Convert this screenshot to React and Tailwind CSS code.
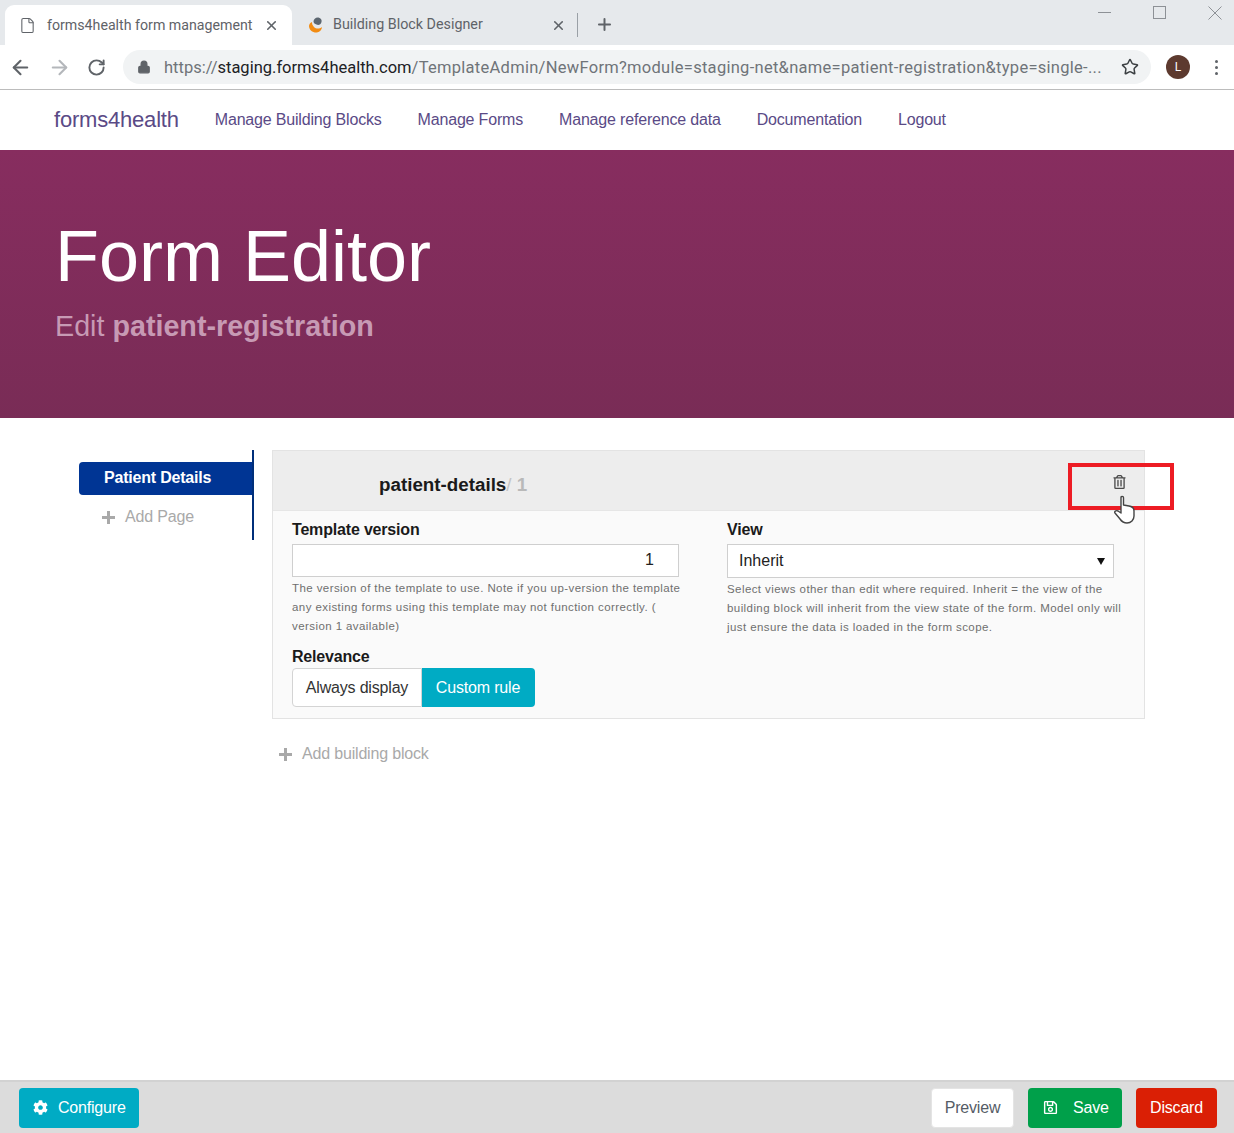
import { ArrowLeft, ArrowRight, RotateCw, Lock, Star, Plus, X, File } from "lucide-react";
import { FaCog, FaRegSave, FaRegTrashAlt } from "react-icons/fa";

const NAV = ["Manage Building Blocks", "Manage Forms", "Manage reference data", "Documentation", "Logout"];

function PlusGlyph() {
  return (
    <svg viewBox="0 0 13 13" className="h-[13px] w-[13px] flex-none" fill="#a9a9a9">
      <path d="M5 0h3v5h5v3H8v5H5V8H0V5h5z" />
    </svg>
  );
}

function BrowserChrome() {
  return (
    <div className="font-['Roboto',sans-serif]">
      {/* Tab strip */}
      <div className="relative flex h-[45px] items-end bg-[#e6e9ec] pl-[5px]">
        <div className="flex h-[40px] w-[287px] items-center rounded-t-[9px] bg-white pl-[14px] pr-[13px]">
          <File className="h-[17px] w-[17px] text-[#5f6368]" strokeWidth={1.5} />
          <span className="ml-[11px] flex-1 whitespace-nowrap pt-[2px] text-[14.2px] text-[#5f6368]">forms4health form management</span>
          <X className="h-[15px] w-[15px] text-[#5f6368]" strokeWidth={2.5} />
        </div>
        <div className="flex h-[40px] w-[280px] items-center pl-[15px] pr-[6px]">
          <svg viewBox="0 0 18 18" className="h-[18px] w-[18px]">
            <path d="M2 10 C2 14 6 17 10 16.5 C13 16 15 13.5 15 11 C12.5 13 9 13 7 11 C5.5 9.5 5 8 5 6 C3 7 2 8.5 2 10Z" fill="#f28c13" />
            <path d="M6.5 5.5 C6.5 3 9 1 11.5 1.5 C14 2 15 4 14.5 6 C14 8.5 11.5 9.5 9.5 8.5 C8 8 6.5 7 6.5 5.5Z" fill="#5c6670" />
          </svg>
          <span className="ml-[8px] flex-1 whitespace-nowrap text-[14.3px] text-[#5f6368]">Building Block Designer</span>
          <X className="h-[15px] w-[15px] text-[#5f6368]" strokeWidth={2.5} />
        </div>
        <div className="mb-[8px] ml-[5px] h-[24px] w-px bg-[#9aa0a6]" />
        <Plus className="mb-[11px] ml-[17px] h-[19px] w-[19px] text-[#5f6368]" strokeWidth={2.5} />
        {/* Window controls */}
        <div className="absolute left-[1098px] top-[6px] flex items-start gap-[42px]">
          <span className="mt-[6px] h-px w-[13px] bg-[#8d9196]" />
          <span className="h-[13px] w-[13px] border border-[#8d9196]" />
          <svg viewBox="0 0 14 14" className="h-[14px] w-[14px]" stroke="#8d9196" strokeWidth="1">
            <path d="M0.5 0.5 L13.5 13.5 M13.5 0.5 L0.5 13.5" />
          </svg>
        </div>
      </div>
      {/* Toolbar */}
      <div className="flex h-[45px] items-center border-b border-[#bcbcbc] bg-white pl-[9px] pr-[9px]">
        <ArrowLeft className="h-[23px] w-[23px] text-[#5f6368]" strokeWidth={2.2} />
        <ArrowRight className="ml-[16px] h-[23px] w-[23px] text-[#b4b7bb]" strokeWidth={2.2} />
        <RotateCw className="ml-[16px] h-[19px] w-[19px] text-[#5f6368]" strokeWidth={2.4} />
        <div className="ml-[17px] flex h-[34px] w-[1028px] items-center rounded-full bg-[#f1f3f4] pl-[14px] pr-[12px]">
          <Lock className="h-[14px] w-[14px] fill-[#5f6368] text-[#5f6368]" strokeWidth={2} />
          <span className="ml-[13px] flex-1 whitespace-nowrap pt-[2px] text-[16.5px] text-[#6f7479]">
            https://<span className="text-[#202124]">staging.forms4health.com</span>
            <span className="tracking-[0.28px]">/TemplateAdmin/NewForm?module=staging-net&amp;name=patient-registration&amp;type=single-...</span>
          </span>
          <Star className="h-[18px] w-[18px] text-[#3c4043]" strokeWidth={2} />
        </div>
        <div className="ml-[15px] flex h-[24px] w-[24px] items-center justify-center rounded-full bg-[#5d3a2f] text-[12px] text-white">L</div>
        <div className="ml-[25px] flex flex-col gap-[3px]">
          <span className="h-[3px] w-[3px] rounded-full bg-[#5f6368]" />
          <span className="h-[3px] w-[3px] rounded-full bg-[#5f6368]" />
          <span className="h-[3px] w-[3px] rounded-full bg-[#5f6368]" />
        </div>
      </div>
    </div>
  );
}

function TopNav() {
  return (
    <nav className="flex h-[60px] items-center bg-white pl-[54px] text-[#5a4a86]">
      <span className="mb-[2px] mr-[36px] text-[22px] tracking-[-0.2px]">forms4health</span>
      <div className="flex gap-[36px] text-[16px] tracking-[-0.18px]">
        {NAV.map((item) => (
          <span key={item} className="whitespace-nowrap">{item}</span>
        ))}
      </div>
    </nav>
  );
}

function Hero() {
  return (
    <header className="h-[268px] bg-linear-to-b from-[#872d5f] to-[#792c56] pl-[55px] pt-[62px]">
      <h1 className="text-[72px] leading-[88px] text-white">Form Editor</h1>
      <p className="mt-[8px] text-[28.7px] leading-[36px] text-[#c79ab4]">
        Edit <span className="font-bold">patient-registration</span>
      </p>
    </header>
  );
}

function Sidebar() {
  return (
    <aside className="h-[90px] w-[175px] border-r-2 border-[#002f7a] pt-[12px]">
      <div className="flex h-[33px] items-center rounded-l-[4px] bg-[#003594] pb-[2px] pl-[25px] text-[16px] font-bold tracking-[-0.2px] text-white">
        Patient Details
      </div>
      <div className="mt-[10px] flex items-center pl-[23px] text-[16px] tracking-[-0.15px] text-[#a9a9a9]">
        <PlusGlyph />
        <span className="ml-[10px]">Add Page</span>
      </div>
    </aside>
  );
}

function BlockPanel() {
  return (
    <div className="flex-none">
      <section className="h-[269px] w-[873px] border border-[#e3e3e3] bg-[#fafafa]">
        <div className="flex h-[60px] items-center border-b border-[#e6e6e6] bg-[#ededed] pl-[106px] pr-[18px]">
          <span className="flex-1 pt-[10px] text-[18.8px] font-bold text-[#1a1a1a]">
            patient-details<span className="font-normal text-[#c4c4c4]">/</span>
            <span className="text-[#b9b9b9]"> 1</span>
          </span>
          <FaRegTrashAlt className="mt-[2px] h-[14px] w-[13px] text-[#4a4a4a]" />
        </div>
        <div className="grid grid-cols-[435px_1fr] pl-[19px] pt-[9px]">
          <div>
            <label className="block text-[16px] font-bold leading-[19px] tracking-[-0.18px] text-[#1a1a1a]">Template version</label>
            <div className="mt-[5px] flex h-[33px] w-[387px] items-center justify-end border border-[#cfcfcf] bg-white pb-[2px] pr-[24px] text-[16px] text-[#222]">1</div>
            <p className="mt-[2px] w-[395px] text-[11.5px] leading-[19px] tracking-[0.42px] text-[#6f6f6f]">
              The version of the template to use. Note if you up-version the template any existing forms using this template may not function correctly. ( version 1 available)
            </p>
            <label className="mt-[11px] block text-[16px] font-bold leading-[19px] tracking-[-0.18px] text-[#1a1a1a]">Relevance</label>
            <div className="mt-[2px] flex h-[39px] w-fit text-[16px] tracking-[-0.18px]">
              <div className="flex w-[130px] items-center justify-center rounded-l-[4px] border border-[#d4d4d4] bg-white text-[#333]">Always display</div>
              <div className="flex w-[113px] items-center justify-center rounded-r-[4px] bg-[#00abc4] pr-px text-white">Custom rule</div>
            </div>
          </div>
          <div>
            <label className="block text-[16px] font-bold leading-[19px] tracking-[-0.18px] text-[#1a1a1a]">View</label>
            <div className="mt-[5px] flex h-[34px] w-[387px] items-center justify-between border border-[#cfcfcf] bg-white pl-[11px] pr-[8px] text-[16px] text-[#222]">
              <span>Inherit</span>
              <span className="h-0 w-0 border-x-[4px] border-t-[7px] border-x-transparent border-t-[#111]" />
            </div>
            <p className="mt-[2px] w-[398px] text-[11.5px] leading-[19px] tracking-[0.42px] text-[#6f6f6f]">
              Select views other than edit where required. Inherit = the view of the building block will inherit from the view state of the form. Model only will just ensure the data is loaded in the form scope.
            </p>
          </div>
        </div>
      </section>
      <div className="mt-[23px] flex items-center pl-[7px] text-[16px] tracking-[-0.18px] text-[#a9a9a9]">
        <PlusGlyph />
        <span className="ml-[10px]">Add building block</span>
      </div>
    </div>
  );
}

function Footer() {
  return (
    <footer className="flex h-[53px] items-center border-t-2 border-[#d2d2d2] bg-[#dcdcdc] pl-[19px] pr-[17px] text-[16px] tracking-[-0.2px]">
      <button className="flex h-[40px] w-[120px] items-center rounded-[4px] bg-[#00abc4] pl-[14px] text-white">
        <FaCog className="h-[15px] w-[15px]" />
        <span className="ml-[10px]">Configure</span>
      </button>
      <button className="ml-auto h-[40px] w-[83px] rounded-[4px] border border-[#e4e4e4] bg-white text-[#555c66]">Preview</button>
      <button className="ml-[14px] flex h-[40px] w-[94px] items-center rounded-[4px] bg-[#00a04a] pl-[15px] text-white">
        <FaRegSave className="h-[15px] w-[15px]" />
        <span className="ml-[15px]">Save</span>
      </button>
      <button className="ml-[14px] h-[40px] w-[81px] rounded-[4px] bg-[#da1f05] text-white">Discard</button>
    </footer>
  );
}

export default function App() {
  return (
    <div className="relative flex h-[1133px] w-[1234px] flex-col overflow-hidden bg-white font-['Liberation_Sans',Arial,sans-serif]">
      <BrowserChrome />
      <TopNav />
      <Hero />
      <main className="flex flex-1 items-start gap-[18px] pl-[79px] pt-[32px]">
        <Sidebar />
        <BlockPanel />
      </main>
      <Footer />

      {/* Annotation drawn over the screenshot */}
      <div className="absolute left-[1068px] top-[463px] h-[47px] w-[106px] border-[4px] border-[#ed1c24]" />
      <svg viewBox="0 0 24 30" className="absolute left-[1113px] top-[495px] h-[30px] w-[24px]" fill="white" stroke="#444" strokeWidth="1.4" strokeLinejoin="round">
        <path d="M8 2.5 C8 1 10.5 1 10.5 2.5 V10 L16 11 C19 11.5 21 13 21 16 V21 C21 25 18 28 14 28 C11 28 9 27 7 24 L2 18 C1 16.5 3 15 5 16 L8 18 Z" />
      </svg>
    </div>
  );
}
